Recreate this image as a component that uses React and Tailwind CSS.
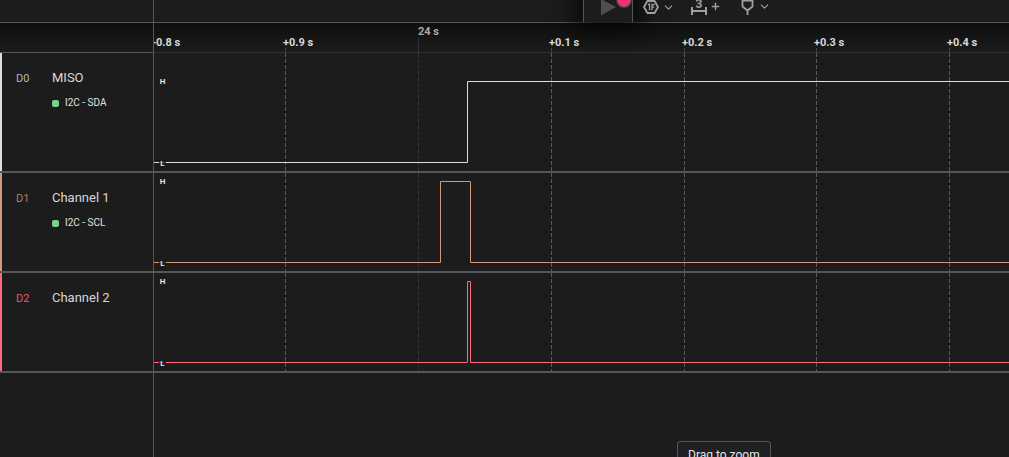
import { ChevronDown, Plus } from "lucide-react";

// x is the distance from the left edge of the plot
const TICKS = [
  { x: -2, label: "+0.8 s" },
  { x: 131, label: "+0.9 s" },
  { x: 264, label: "24 s", major: true },
  { x: 397, label: "+0.1 s" },
  { x: 530, label: "+0.2 s" },
  { x: 662, label: "+0.3 s" },
  { x: 795, label: "+0.4 s" },
];

const CHANNELS = [
  {
    id: "D0",
    name: "MISO",
    analyzer: "I2C - SDA",
    color: "#dcdedb",
    idClass: "text-[#b4b4b4]",
    barClass: "bg-[#dcdedb]",
    heightClass: "h-[120px]",
    topClass: "pt-6",
    high: 28,
    edges: [313],
  },
  {
    id: "D1",
    name: "Channel 1",
    analyzer: "I2C - SCL",
    color: "#cf9a7b",
    idClass: "text-[#b0816a]",
    barClass: "bg-[#cf9a7b]",
    heightClass: "h-[100px]",
    topClass: "pt-1",
    high: 8,
    edges: [286, 316],
  },
  {
    id: "D2",
    name: "Channel 2",
    color: "#ff6b7a",
    idClass: "text-[#e0606e]",
    barClass: "bg-[#ff6b7a]",
    heightClass: "h-[100px]",
    topClass: "pt-1",
    high: 8,
    edges: [313, 316],
  },
];

const SWING = 81;
const PLOT_END = 8000;

function wavePath(high, edges) {
  const top = high + 0.5;
  const bottom = top + SWING;
  let level = bottom;
  let d = `M0 ${bottom}`;
  edges.forEach((x) => {
    level = level === bottom ? top : bottom;
    d += ` H${x + 0.5} V${level}`;
  });
  return `${d} H${PLOT_END}`;
}

function PlayIcon() {
  return (
    <svg width="48" height="22" viewBox="0 0 48 22">
      <path d="M17 -1 V15.5 L32 7 Z" fill="#4f4f4f" />
      <circle cx="40" cy="0" r="7" fill="#ff2d6b" stroke="#55555b" strokeWidth="1.5" />
    </svg>
  );
}

function HexIcon() {
  return (
    <svg width="16" height="14" viewBox="0 0 16 14" fill="none" stroke="#a0a0a0">
      <path d="M4.4 1 H11.6 L15 7 L11.6 13 H4.4 L1 7 Z" strokeWidth="1.8" strokeLinejoin="round" />
      <path d="M5 5 L6.5 4 V10.2 M9 10.2 V4.5 H11.7 M9 7.2 H11.3" strokeWidth="1.3" />
    </svg>
  );
}

function MeasureIcon() {
  return (
    <svg width="16" height="8" viewBox="0 0 16 8" fill="none" stroke="#a0a0a0" strokeWidth="2">
      <path d="M1 0 V8 M15 0 V8 M1 4 H15" />
    </svg>
  );
}

function MarkerIcon() {
  return (
    <svg width="13" height="15" viewBox="0 0 13 15" fill="none" stroke="#a0a0a0" strokeWidth="1.8">
      <path d="M1.5 0.5 V6.5 L6.5 10.5 L11.5 6.5 V0.5 Z M6.5 10.5 V15" />
    </svg>
  );
}

function Toolbar() {
  return (
    <div className="flex h-[23px] border-b border-[#55555b]">
      <div className="w-[154px] shrink-0 border-r border-[#55555b]" />
      <div className="ml-[429px] flex h-[22px] shrink-0 items-start text-[#a0a0a0]">
        <button aria-label="Start capture" className="h-[22px] w-[50px] overflow-hidden border-x border-[#55555b] bg-[#1c1c1c] shadow-[0_0_24px_8px_rgba(0,0,0,0.8)]">
          <PlayIcon />
        </button>
        <button aria-label="Trigger" className="relative ml-[10px] flex h-[14px] items-center gap-[3px]">
          <HexIcon />
          <ChevronDown size={13} strokeWidth={2} />
        </button>
        <button aria-label="Add measurement" className="relative ml-4 flex items-start gap-[3px]">
          <span className="flex flex-col items-center">
            <span className="h-[7px] text-[12px] leading-[8px] font-bold">3</span>
            <MeasureIcon />
          </span>
          <Plus className="mt-px" size={11} strokeWidth={3} />
        </button>
        <button aria-label="Add marker" className="relative ml-5 flex items-start gap-1">
          <MarkerIcon />
          <ChevronDown size={13} strokeWidth={2} />
        </button>
      </div>
    </div>
  );
}

function Ruler() {
  return (
    <div className="flex h-[30px] bg-linear-to-b from-black/50 to-transparent">
      <div className="w-[154px] shrink-0 border-r border-b border-[#55555b]" />
      <div className="relative flex-1 overflow-hidden border-b border-[#303036]">
        <svg className="absolute inset-0 h-full w-full">
          {TICKS.map((t) => (
            <path key={t.x} d={`M${t.x + 0.5} ${t.major ? 15 : 25} V30`} stroke={t.major ? "#303036" : "#454549"} />
          ))}
        </svg>
        {TICKS.map((t) => (
          <span
            key={t.label}
            style={{ left: t.major ? t.x : t.x - 2 }}
            className={`absolute text-[11px] leading-4 font-bold whitespace-nowrap ${
              t.major ? "top-px text-[#a9a9a9]" : "top-[12px] text-[#d8d8d8]"
            }`}
          >
            {t.label}
          </span>
        ))}
      </div>
    </div>
  );
}

function ChannelRow({ channel }) {
  return (
    <div className={`flex border-b-2 border-[#55555b] ${channel.heightClass}`}>
      <div className="flex w-[154px] shrink-0 border-r border-[#55555b]">
        <div className={`w-[2px] ${channel.barClass}`} />
        <div className={`mt-[18px] ml-[14px] w-9 text-[11px] leading-4 ${channel.idClass}`}>{channel.id}</div>
        <div className="mt-[17px]">
          <div className="text-[13px] leading-4 text-[#d8d8d8]">{channel.name}</div>
          {channel.analyzer && (
            <div className="mt-[9px] flex items-center gap-[6px] text-[10px] leading-4 text-[#e0e0e0]">
              <span className="size-[7px] rounded-[2px] bg-[#7ccf8f]" />
              {channel.analyzer}
            </div>
          )}
        </div>
      </div>

      <div className="relative flex-1 overflow-hidden">
        <svg className="absolute inset-0 h-full w-full" fill="none">
          {TICKS.map((t) => (
            <path
              key={t.x}
              d={`M${t.x + 0.5} 0 V200`}
              stroke={t.major ? "#35353a" : "#5a5a60"}
              strokeDasharray="4 2"
            />
          ))}
          <path d={wavePath(channel.high, channel.edges)} stroke={channel.color} />
        </svg>
        {/* Logic level labels */}
        <div className={`relative flex w-[17px] flex-col items-center gap-[72px] text-[8px] leading-[10px] font-bold text-[#e6e6e6] ${channel.topClass}`}>
          <span className="rounded-full bg-[#1c1c1c]/80 px-px">H</span>
          <span className="rounded-full bg-[#1c1c1c]/80 px-px">L</span>
        </div>
      </div>
    </div>
  );
}

export default function App() {
  return (
    <div className="relative flex h-screen flex-col overflow-hidden bg-[#1c1c1c] font-['Roboto',sans-serif]">
      <Toolbar />
      <Ruler />
      {CHANNELS.map((channel) => (
        <ChannelRow key={channel.id} channel={channel} />
      ))}
      <div className="w-[154px] flex-1 border-r border-[#55555b]" />

      <div role="tooltip" className="absolute top-[441px] left-[677px] rounded-[3px] border border-[#55555b] bg-[#202124] px-[10px] py-[5px] text-[12px] leading-4 whitespace-nowrap text-[#e6e6e6]">
        Drag to zoom
      </div>
    </div>
  );
}
